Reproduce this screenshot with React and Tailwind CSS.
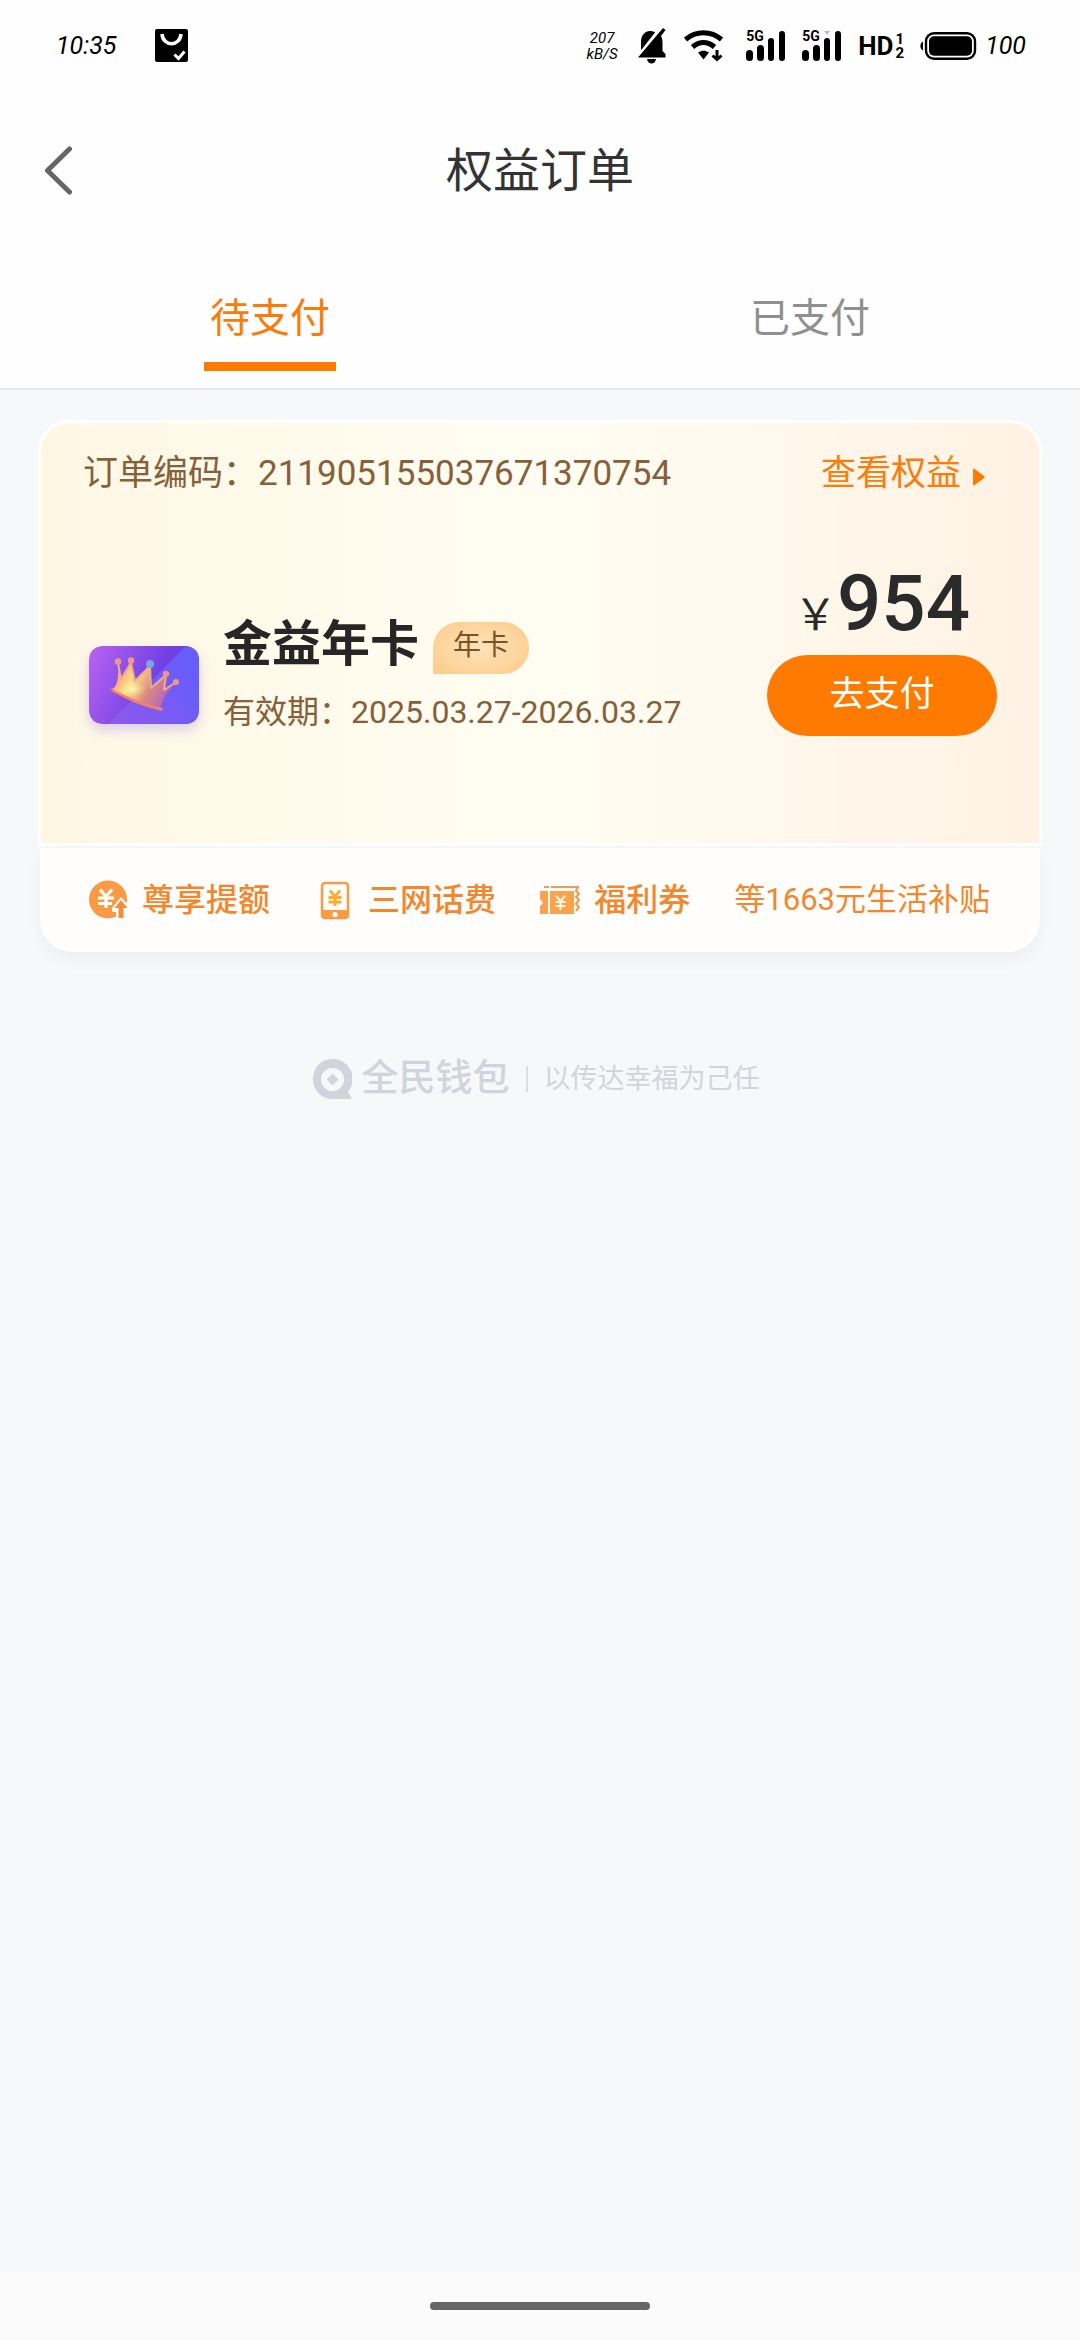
import { useState } from 'react';

const order = {
  code: '211905155037671370754',
  name: '金益年卡',
  type: '年卡',
  period: '2025.03.27-2026.03.27',
  price: 954,
};

const tabs = ['待支付', '已支付'];

const Signal = ({ roaming }) => (
  <div className="relative h-[30px] w-10">
    <svg className="h-[30px] w-10" viewBox="0 0 40 30">
      <rect x="0" y="19" width="7" height="11" rx="3.5" />
      <rect x="11" y="14" width="7" height="16" rx="3.5" />
      <rect x="22" y="7" width="6" height="23" rx="3" />
      <rect x="33" y="0" width="6" height="30" rx="3" />
      {roaming && <path d="M22 0h6l-3 4z" fill="#bbb" />}
    </svg>
    <span className="absolute left-0 top-0 text-[14px] leading-[11px] font-bold">5G</span>
  </div>
);

const StatusBar = () => (
  <div className="flex h-[92px] items-center justify-between bg-[#fefefe] pl-[56px] pr-[54px] text-black">
    <div className="flex items-center gap-[38px]">
      <span className="text-[25px] leading-8 italic">10:35</span>
      <svg className="h-[34px] w-[34px]" viewBox="0 0 34 34" fill="none">
        <rect width="33" height="33" rx="2" fill="#000" />
        <path d="M7 5c1 13 18 13 19 0" stroke="#fff" strokeWidth="3.5" />
        <path d="M19.500 25.500l4 4 6-7" stroke="#fff" strokeWidth="3" />
      </svg>
    </div>
    <div className="flex items-center gap-4">
      <div className="w-10 text-center text-[15px] leading-4 italic">
        <div>207</div>
        <div>kB/S</div>
      </div>
      <svg className="h-[36px] w-[30px]" viewBox="0 0 30 36">
        <path d="M3 22V14C3 7 7 3 12 3c2 0 4 .5 5 1.500L4 21z" />
        <path d="M0 29.500L25 0l2.500 2-4.500 6c1 2 1.500 4 1.500 7v8l3 3v3.500z" />
        <path d="M9 31h9c-1 6-8 6-9 0z" />
      </svg>
      <svg className="h-[32px] w-[46px]" viewBox="0 0 46 32" fill="none" stroke="#000">
        <path d="M1.500 9.500C12 .5 27 .5 37.500 9.500" strokeWidth="5" />
        <path d="M8.500 17c7-6 15-6 22 0" strokeWidth="5" />
        <path d="M14 22.500c4-2.500 7-2.500 11 0l-5.500 7z" fill="#000" stroke="none" />
        <path d="M33 20v9M28.500 25.500l4.500 4 4.500-4" strokeWidth="3" />
      </svg>
      <Signal />
      <Signal roaming />
      <div className="flex h-[30px] w-[46px] items-center justify-between font-bold">
        <span className="text-[26px] leading-[30px]">HD</span>
        <span className="flex flex-col text-[15px] leading-[14px]">
          <span>1</span>
          <span>2</span>
        </span>
      </div>
      <div className="flex items-center gap-2">
        <svg className="h-[28px] w-[57px]" viewBox="0 0 57 28">
          <path d="M3 9.500v9C-.5 17-.5 11 3 9.500z" />
          <rect x="6" y="1.200" width="49" height="25.600" rx="8" fill="none" stroke="#000" strokeWidth="2.400" />
          <rect x="9" y="4.300" width="43" height="19.500" rx="5" />
        </svg>
        <span className="text-[25px] leading-8 italic">100</span>
      </div>
    </div>
  </div>
);

const Crown = () => (
  <svg className="mb-[6px] h-[78px] w-[110px] rounded-[13px] shadow-[0_6px_12px_rgba(110,90,240,0.25)]" viewBox="0 0 110 78">
    <defs>
      <linearGradient id="plate" x1="0" y1="0" x2="1" y2="0.3">
        <stop offset="0" stopColor="#b963f2" />
        <stop offset="0.7" stopColor="#6f40e2" />
      </linearGradient>
      <linearGradient id="shine" x1="0" y1="1" x2="1" y2="0.4">
        <stop offset="0" stopColor="#9257ea" />
        <stop offset="1" stopColor="#665dfb" />
      </linearGradient>
      <linearGradient id="gold" x1="0" y1="0.4" x2="1" y2="0.8">
        <stop offset="0" stopColor="#f08a72" />
        <stop offset="0.3" stopColor="#ffe28a" />
        <stop offset="0.6" stopColor="#d98a80" />
        <stop offset="1" stopColor="#a955d8" />
      </linearGradient>
      <radialGradient id="glow">
        <stop offset="0" stopColor="#fffbc8" />
        <stop offset="1" stopColor="#ffd070" stopOpacity="0" />
      </radialGradient>
    </defs>
    <rect width="110" height="78" rx="13" fill="url(#plate)" />
    <path d="M97 0C105 1 110 6 110 13v52c0 8-5 13-13 13H19z" fill="url(#shine)" />
    <path d="M23 43c4-2 7-6 6-27l3 16 10-17 3 20 16-16 1 24 15-14-2 16 11-9-10 14-5 12c-18-4-33-10-51-20z" fill="url(#gold)" />
    <path d="M29 17l3 16 10-16 4 18 15-15 1 22 15-13-2 15 11-7" fill="none" stroke="#eeae84" strokeWidth="2" strokeLinejoin="round" />
    <ellipse cx="43" cy="43" rx="14" ry="9" fill="url(#glow)" />
    <path d="M23 43c16 8 32 15 51 19l-1 3c-18-4-35-11-51-20z" fill="#f0806a" />
    <circle cx="29" cy="15.500" r="3.200" fill="#ec9a86" />
    <circle cx="42" cy="14.500" r="3.200" fill="#ee9c80" />
    <circle cx="61" cy="18" r="4" fill="#79a5e6" />
    <circle cx="77" cy="28" r="3.200" fill="#ee9686" />
    <circle cx="87" cy="36" r="3" fill="#ee9a86" />
  </svg>
);

const CoinIcon = () => (
  <svg className="h-10 w-10" viewBox="0 0 40 40" fill="none">
    <circle cx="20" cy="19.500" r="19" fill="#fb9a45" />
    <path d="M12 9.500l6 7 6-7M10 18h16M10 23.500h14M18 16v12" stroke="#fff" strokeWidth="3.200" />
    <path d="M33 17l8 9v14H28v-8h-4v-4z" fill="#fffefd" />
    <path d="M33 20l6.500 8H35.500v10h-5V28h-4z" fill="#fb8a35" />
  </svg>
);

const PhoneIcon = () => (
  <svg className="h-10 w-10" viewBox="0 0 40 40" fill="none">
    <rect x="8" y="3" width="26" height="35" rx="3" stroke="#fb9a45" strokeWidth="2.500" />
    <path d="M8 30h26v6a3 3 0 0 1-3 3H11a3 3 0 0 1-3-3z" fill="#fb9a45" />
    <circle cx="21" cy="34.500" r="2.600" fill="#fff" />
    <path d="M16 10.500l5 6 5-6M14.500 17.500h13M14.500 22h13M21 16v10" stroke="#fbae30" strokeWidth="2.800" />
  </svg>
);

const CouponIcon = () => (
  <svg className="h-10 w-10" viewBox="0 0 40 40" fill="none">
    <path d="M0 11h8v23H0v-8l3-3-3-4zM10 11h24v23H10z" fill="#fba24c" />
    <path d="M4 7h5M11 7h28M38 7l-2 4 3 3-3 3 3 3-3 4 3 3-3 4" stroke="#f59a55" strokeWidth="2.200" />
    <path d="M16 16l4.500 5 4.500-5M15.500 22h10M15.500 26h10M20.500 21v9" stroke="#fff6e0" strokeWidth="2.200" />
  </svg>
);

const benefits = [
  { text: '尊享提额', Icon: CoinIcon },
  { text: '三网话费', Icon: PhoneIcon },
  { text: '福利券', Icon: CouponIcon },
];

const OrderCard = () => (
  <article className="mx-[38px] mt-[30px]">
    <div className="rounded-t-[32px] border-[3px] border-white bg-linear-to-r from-[#fff7e4] via-[#fffdf2] to-[#fff2e4]">
      <div className="flex items-center justify-between pl-[42px] pr-[54px] pt-[26px] text-[35px] leading-[50px]">
        <p className="text-[#85603a]">订单编码：{order.code}</p>
        <a href="#benefits" className="flex items-center gap-3 text-[#fa7d0c]">
          查看权益
          <svg className="mt-[6px] h-[18px] w-3" viewBox="0 0 12 18" fill="#ff7a00">
            <path d="M0 2q0-3 3 0l8 6q1.500 1 0 2l-8 6q-3 3-3 0z" />
          </svg>
        </a>
      </div>
      <div className="flex items-end justify-between pb-[107px] pl-12 pr-[42px] pt-[65px]">
        <div className="mb-[6px] flex items-end gap-6">
          <Crown />
          <div>
            <div className="flex gap-[14px]">
              <h2 className="text-[49px] leading-[46px] font-bold text-[#272525]">{order.name}</h2>
              <span className="flex h-[52px] w-[96px] items-center justify-center rounded-[26px] rounded-bl-none bg-radial from-[#ffe2b8] to-[#fbcb8b] pb-1 text-[28px] leading-8 text-[#7a5424]">
                {order.type}
              </span>
            </div>
            <p className="mt-5 text-[32px] leading-9 text-[#85603a]">有效期：{order.period}</p>
          </div>
        </div>
        <div className="flex flex-col items-center">
          <p className="flex items-baseline font-medium text-[#2a2a2a]">
            <span className="text-[43px] leading-[43px] font-normal font-['Noto_Sans_CJK_SC',sans-serif]">￥</span>
            <span className="text-[78px] leading-[80px]">{order.price}</span>
          </p>
          <button type="button" className="mt-[11px] h-[81px] w-[230px] rounded-full bg-[#ff7a00] text-[35px] text-white">
            去支付
          </button>
        </div>
      </div>
    </div>
    <div
      id="benefits"
      className="mx-[2px] flex h-[106px] items-center justify-between rounded-b-[32px] border-t-2 border-[#f4f6f9] bg-[#fffefd] pl-12 pr-[50px] text-[#f6862b] shadow-[0_8px_16px_rgba(0,0,0,0.04)]"
    >
      {benefits.map(({ text, Icon }) => (
        <div key={text} className="flex items-center gap-[14px] text-[32px] font-medium">
          <Icon />
          {text}
        </div>
      ))}
      <span className="text-[31px]">等1663元生活补贴</span>
    </div>
  </article>
);

const Brand = () => (
  <div className="mt-[106px] flex items-center justify-center pr-2 text-[#d2d4dc]">
    <svg className="h-[41px] w-[39px]" viewBox="0 0 39 41">
      <path d="M19 0a19 20 0 1 0 0 40h20l-4-7A20 20 0 0 0 19 0z" fill="#d2d4dc" />
      <circle cx="19.500" cy="20.500" r="11.500" fill="#f6f8fa" />
      <path d="M19.500 14.500l6 6-6 6-6-6z" fill="#d2d4dc" />
    </svg>
    <span className="ml-[10px] text-[37px] leading-[42px] font-medium">全民钱包</span>
    <span className="mx-4 h-[26px] w-[2px] bg-[#dcdee4]" />
    <span className="text-[27px] leading-[42px]">以传达幸福为己任</span>
  </div>
);

const App = () => {
  const [active, setActive] = useState(0);

  return (
    <div className="flex min-h-screen flex-col bg-[#f6f8fa] font-['Roboto','Noto_Sans_CJK_SC',sans-serif]">
      <StatusBar />
      <header className="grid h-[158px] grid-cols-[1fr_auto_1fr] items-center bg-[#fefefe] px-11">
        <button type="button" aria-label="返回" className="w-7">
          <svg className="h-[50px] w-7" viewBox="0 0 28 50" fill="none" stroke="#666" strokeWidth="5" strokeLinecap="round" strokeLinejoin="round">
            <path d="M25.500 3L3.500 24.500l22 21.500" />
          </svg>
        </button>
        <h1 className="text-[47px] leading-[60px] text-[#333]">权益订单</h1>
      </header>
      <nav className="grid grid-cols-2 border-b-2 border-[#e6e7e9] bg-[#fefefe]">
        {tabs.map((tab, index) => (
          <button
            key={tab}
            type="button"
            onClick={() => setActive(index)}
            className={`flex flex-col items-center pb-[17px] pt-[42px] text-[40px] leading-[54px] ${active === index ? 'text-[#fb7b08]' : 'text-[#8f8f8f]'}`}
          >
            {tab}
            <span className={`mt-4 h-[9px] w-[132px] ${active === index ? 'bg-[#ff7a00]' : ''}`} />
          </button>
        ))}
      </nav>
      <main className="flex-1">
        <OrderCard />
        <Brand />
      </main>
      <footer className="flex h-[68px] items-center justify-center bg-[#fbfbfb]">
        <div className="h-2 w-[220px] rounded-full bg-[#666]" />
      </footer>
    </div>
  );
};

export default App;
